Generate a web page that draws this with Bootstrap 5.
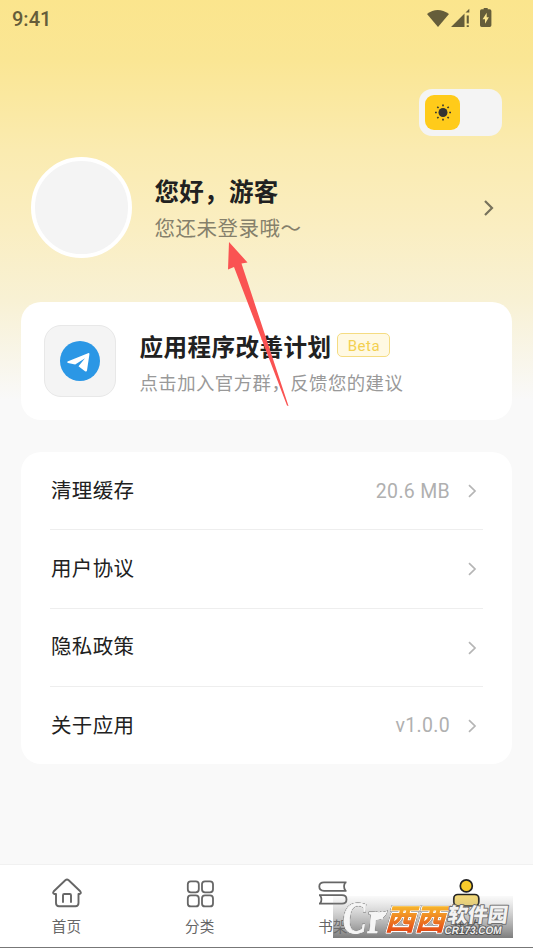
<!DOCTYPE html>
<html lang="zh-CN">
<head>
<meta charset="utf-8">
<meta name="viewport" content="width=device-width, initial-scale=1">
<title>我的</title>
<link href="https://cdn.jsdelivr.net/npm/bootstrap@5.3.0/dist/css/bootstrap.min.css" rel="stylesheet">
<style>
  body { font-family: Roboto, "Noto Sans CJK SC", sans-serif; color: #212121; background: #f9f9f9; }
  svg { display: block; }
  .screen { height: 948px; background: linear-gradient(180deg, #fbe58d 0, #fae694 60px, #faebb0 150px, #faeec2 230px, #f8f1d4 300px, #f9f9f9 400px); }
  .status { height: 37px; padding: 0 40px 0 12px; color: #655d3a; font-size: 20px; font-weight: 500; }
  .toggle-row { padding: 52px 31px 0; }
  .theme-toggle { width: 83px; height: 47px; padding: 6px; background: #f4f4f4; border-radius: 13px; }
  .theme-knob { width: 35px; height: 35px; background: #ffcb1a; border-radius: 9px; }
  .profile { padding: 21px 38px 0 31px; }
  .avatar { width: 101px; height: 101px; border: 4px solid #fff; background: #f4f4f4; }
  .profile-text { margin-left: 22.5px; padding-top: 3px; }
  .hello { font-size: 24.5px; letter-spacing: .3px; line-height: 36px; font-weight: 700; }
  .login-tip { font-size: 20.5px; letter-spacing: .5px; line-height: 30px; color: #85806b; margin-top: 3px; }
  .panel { margin: 0 21px; background: #fff; border-radius: 20px; }
  .promo { margin-top: 44px; height: 118px; padding: 0 23px; }
  .promo-icon { width: 72px; height: 72px; border: 1.5px solid #e8e8e8; background: #f4f4f4; border-radius: 17px; }
  .promo-text { padding-top: 5px; margin-left: 23.5px; }
  .promo-title { font-size: 23.6px; letter-spacing: .4px; line-height: 34px; font-weight: 700; }
  .promo-sub { font-size: 18.4px; letter-spacing: .45px; line-height: 27px; color: #999; margin-top: 5px; }
  .beta { width: 53px; height: 24px; padding-top: 2px; border: 1.5px solid #f5dc82; background: #fff9e3; border-radius: 5px; color: #f3d051; font-size: 15px; letter-spacing: .5px; margin: -5px 0 0 6px; }
  .settings { margin-top: 32px; height: 312px; padding: 0 29px; }
  .setting { flex: 1 1 0; font-size: 20.5px; letter-spacing: .35px; padding: 1px 0 0 1px; }
  .setting + .setting { border-top: 1.5px solid #eee; }
  .setting-value { color: #b0b0b0; font-size: 19.5px; letter-spacing: .3px; margin-right: 16px; }
  .tabs { height: 84px; border-top: 1px solid #f1f1f1; border-bottom: 1px solid #777; background: #fff; }
  .tab { color: #666; font-size: 14.6px; letter-spacing: .3px; padding-top: 12px; }
  .tab-label { line-height: 22px; margin-top: 7px; }
  .tab-active { color: #222; }
  .pointer { left: 220px; top: 236px; }
  .stamp { left: 333px; top: 892px; overflow: visible; }
  .stamp-logo { filter: drop-shadow(0 0 .6px #444) drop-shadow(.6px .6px .3px #555); }
</style>
</head>
<body>
<main class="screen position-relative d-flex flex-column overflow-hidden">
  <header class="status d-flex align-items-center justify-content-between flex-shrink-0">
    <span>9:41</span>
    <svg width="68" height="22" viewBox="0 0 68 22" fill="#655d3a">
      <path d="M2 5.500Q12.500-2.500 24 5.500L13 18.500Z" transform="translate(0 .5)"/>
      <path d="M26 19L39.500 5.500V19ZM40.500 4.500L44.300 .8V4.500ZM41.700 7.500H43.800V15.500H41.700ZM41.700 17.200H43.800V19H41.700Z"/>
      <path fill-rule="evenodd" d="M58 0H62V1.200H64Q65.700 1.200 65.700 3V17.300Q65.700 19 64 19H56Q54.300 19 54.300 17.300V3Q54.300 1.200 56 1.200H58ZM61 4.800L56.900 11.200H59.300V15.800L63.200 9.200H61Z" transform="translate(.7 0)"/>
    </svg>
  </header>

  <div class="toggle-row d-flex justify-content-end">
    <div class="theme-toggle d-flex">
      <div class="theme-knob d-flex align-items-center justify-content-center">
        <svg width="18" height="18" viewBox="-9 -8.500 18 18" stroke="#333" stroke-width="1.600">
          <circle r="4.500" fill="#333" stroke="none"/>
          <path d="M0-8V-6.200M0 6.200V8M-8 0H-6.200M6.200 0H8M-5.700-5.700L-4.500-4.500M5.700-5.700L4.500-4.500M-5.700 5.700L-4.500 4.500M5.700 5.700L4.500 4.500"/>
        </svg>
      </div>
    </div>
  </div>

  <section class="profile d-flex align-items-center">
    <div class="avatar rounded-circle flex-shrink-0"></div>
    <div class="profile-text flex-grow-1 text-nowrap">
      <div class="hello">您好，游客</div>
      <div class="login-tip">您还未登录哦～</div>
    </div>
    <svg width="13" height="18" viewBox="0 0 13 18" fill="none" stroke="#77725c" stroke-width="2.200"><path d="M3 2L10 9L3 16"/></svg>
  </section>

  <section class="panel promo d-flex align-items-center flex-shrink-0">
    <div class="promo-icon d-flex align-items-center justify-content-center flex-shrink-0">
      <svg width="40" height="40" viewBox="0 0 40 40">
        <circle cx="20" cy="20" r="20" fill="#2b97e5"/>
        <path fill="#fff" d="M7.500 20.500L28 12.200Q29.700 11.700 29.400 13.500L27 29.500Q26.600 31.300 25 30.200L18.500 25.300L25 17.200L15.200 23.600L8 21.900Q6.500 21.200 7.500 20.500Z"/>
      </svg>
    </div>
    <div class="promo-text text-nowrap">
      <div class="d-flex align-items-center">
        <span class="promo-title">应用程序改善计划</span>
        <span class="beta d-flex align-items-center justify-content-center">Beta</span>
      </div>
      <div class="promo-sub">点击加入官方群，反馈您的建议</div>
    </div>
  </section>

  <section class="panel settings d-flex flex-column flex-shrink-0">
    <div class="setting d-flex align-items-center">
      <span class="me-auto">清理缓存</span><span class="setting-value">20.6 MB</span>
      <svg class="me-1" width="13" height="14" viewBox="0 0 13 14" fill="none" stroke="#b5b5b5" stroke-width="1.700"><path d="M3 1.200L9 7L3 12.800"/></svg>
    </div>
    <div class="setting d-flex align-items-center">
      <span class="me-auto">用户协议</span>
      <svg class="me-1" width="13" height="14" viewBox="0 0 13 14" fill="none" stroke="#b5b5b5" stroke-width="1.700"><path d="M3 1.200L9 7L3 12.800"/></svg>
    </div>
    <div class="setting d-flex align-items-center">
      <span class="me-auto">隐私政策</span>
      <svg class="me-1" width="13" height="14" viewBox="0 0 13 14" fill="none" stroke="#b5b5b5" stroke-width="1.700"><path d="M3 1.200L9 7L3 12.800"/></svg>
    </div>
    <div class="setting d-flex align-items-center">
      <span class="me-auto">关于应用</span><span class="setting-value">v1.0.0</span>
      <svg class="me-1" width="13" height="14" viewBox="0 0 13 14" fill="none" stroke="#b5b5b5" stroke-width="1.700"><path d="M3 1.200L9 7L3 12.800"/></svg>
    </div>
  </section>

  <nav class="tabs row g-0 mt-auto flex-shrink-0">
    <div class="tab col d-flex flex-column align-items-center">
      <svg width="32" height="32" viewBox="0 0 32 32" fill="none" stroke="#666" stroke-width="1.900" stroke-linejoin="round" stroke-linecap="round">
        <path d="M5 17H3.200Q1.300 16 2.800 14.300L14.300 3.200Q16 1.900 17.700 3.200L29.200 14.300Q30.700 16 28.800 17H27.500V26Q27.500 29.200 24.500 29.200H8Q5 29.200 5 26Z"/>
        <path d="M12 25V18.200Q12 17 13.200 17H18.800Q20 17 20 18.200V25"/>
      </svg>
      <span class="tab-label">首页</span>
    </div>
    <div class="tab col d-flex flex-column align-items-center">
      <svg width="32" height="32" viewBox="0 0 32 32" fill="none" stroke="#666" stroke-width="1.800">
        <rect x="3.800" y="4.300" width="11" height="11" rx="3"/><rect x="18" y="4.300" width="11" height="11" rx="3"/>
        <rect x="3.800" y="18.400" width="11" height="11" rx="3"/><rect x="18" y="18.400" width="11" height="11" rx="3"/>
      </svg>
      <span class="tab-label">分类</span>
    </div>
    <div class="tab col d-flex flex-column align-items-center">
      <svg width="32" height="32" viewBox="0 0 32 32" fill="none" stroke="#666" stroke-width="1.800" stroke-linejoin="round">
        <path d="M29.500 5.300H7Q2.300 5.300 2.300 9.500T7 13.800H29.500M28.500 5.300Q25.500 9.500 28.500 13.800"/>
        <path d="M2 18.200H25Q29.500 18.200 29.500 22.400T25 26.600H2M3 18.200Q6 22.400 3 26.600"/>
      </svg>
      <span class="tab-label">书架</span>
    </div>
    <div class="tab tab-active col d-flex flex-column align-items-center">
      <svg width="32" height="32" viewBox="0 0 32 32" stroke="#222" stroke-width="1.700">
        <circle cx="16.300" cy="8.900" r="6" fill="#f9cb2b"/>
        <rect x="3.800" y="17.500" width="25" height="11.500" rx="4" fill="#f8dc77"/>
      </svg>
      <span class="tab-label">我的</span>
    </div>
  </nav>

  <svg class="pointer position-absolute" width="76" height="176" viewBox="0 0 76 176">
    <path fill="#fa5352" d="M9 6L27.500 26.500L21.500 27.500L68.500 170L67 169.500L14 31L8 33.500Z"/>
  </svg>

  <svg class="stamp position-absolute" width="180" height="46" viewBox="0 0 180 46">
    <defs>
      <linearGradient id="shade" x1="0" y1="0" x2="0" y2="1"><stop offset="0" stop-color="#999" stop-opacity=".05"/><stop offset="1" stop-color="#606060" stop-opacity=".82"/></linearGradient>
      <linearGradient id="ember" x1="0" y1="0" x2="0" y2="1"><stop offset=".25" stop-color="#f7b52c"/><stop offset=".85" stop-color="#e44a17"/></linearGradient>
    </defs>
    <rect y="4" width="180" height="42" fill="url(#shade)"/>
    <g class="stamp-logo" fill="#f5f5f5" stroke="#f5f5f5">
      <text transform="translate(8 41) skewX(-5)" font-family="'Liberation Serif', serif" font-weight="700" font-size="45" stroke-width="1" textLength="41" lengthAdjust="spacingAndGlyphs">Cr</text>
      <path stroke="none" d="M38 26Q38 18 45 20Q50 21 55 18.500Q51 30 38 28Z"/>
    </g>
    <g class="stamp-logo">
      <text transform="translate(51.500 38) skewX(-16) scale(1 1.050)" font-family="'Noto Sans CJK SC', sans-serif" font-weight="900" fill="url(#ember)" stroke="#fff" stroke-width="2" paint-order="stroke" stroke-linejoin="round" font-size="28" textLength="60" lengthAdjust="spacingAndGlyphs">西西</text>
    </g>
    <g font-family="'Noto Sans CJK SC', sans-serif" font-weight="900" fill="#f2f2f2" stroke="#707070" stroke-width="2" paint-order="stroke" stroke-linejoin="round">
      <text transform="translate(114 29.500) skewX(-8)" font-size="20" textLength="60" lengthAdjust="spacingAndGlyphs">软件园</text>
    </g>
    <g font-family="'Liberation Sans', sans-serif" font-weight="700" fill="#eee" stroke="#555" stroke-width="1.800" paint-order="stroke" stroke-linejoin="round">
      <text transform="translate(111 41.500) skewX(-10)" font-size="11" textLength="57" lengthAdjust="spacingAndGlyphs">CR173.COM</text>
    </g>
  </svg>
</main>
<script src="https://cdn.jsdelivr.net/npm/bootstrap@5.3.0/dist/js/bootstrap.bundle.min.js"></script>
</body>
</html>
